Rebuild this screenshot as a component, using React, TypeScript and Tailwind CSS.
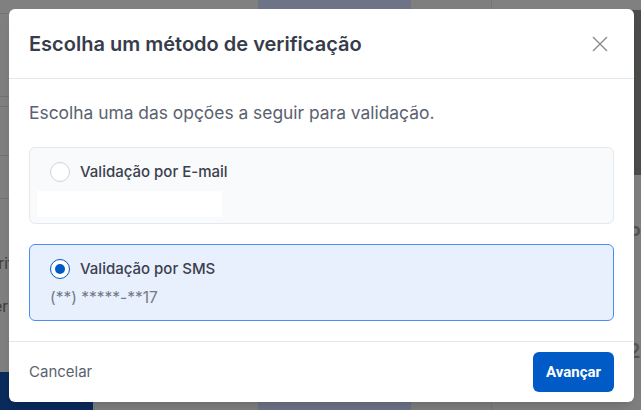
import React, { useState } from 'react';

const App: React.FC = () => {
  const [method, setMethod] = useState<'email' | 'sms'>('sms');

  return (
    <div className="relative h-[410px] w-[641px] overflow-hidden bg-[#808080] font-['Inter',sans-serif]">
      {/* dimmed page behind the dialog */}
      <div className="flex h-full">
        <div className="flex w-[262px] flex-col">
          <div className="h-[14px] border-b border-[#737373]" />
          <div className="h-[83px] border-b border-[#737373]" />
          <div className="h-[10px] border-b border-[#737373]" />
          <div className="h-[49px] border-b border-[#737373]" />
          <div className="h-[43px] border-b border-[#737373]" />
          <div className="flex flex-col gap-[22px] pt-[54px] text-[15px] leading-[21px] text-[#3a3a3a]">
            <span className="-ml-[20px]">Verif</span>
            <span className="-ml-[16px]">Ver</span>
          </div>
          <div className="mt-auto h-[38px] w-[93px] rounded-tr bg-[#0a2b5c]" />
        </div>
        <div className="w-[156px] bg-[#6e7487]" />
        <div className="w-[82px] border-r border-[#767676] bg-[#7f7f7f]" />
        <div className="flex flex-1 flex-col">
          <div className="flex h-[175px] justify-end pt-[10px]">
            <div className="w-[50px] rounded-bl-lg bg-[#4a4d4a]" />
          </div>
          <div className="flex flex-1 flex-col justify-around pl-[136px] text-[20px] font-semibold text-[#555]">
            <span>P</span>
            <span>2</span>
          </div>
        </div>
      </div>

      {/* dialog */}
      <div className="absolute left-[9px] top-[9px] flex h-[393px] w-[625px] flex-col rounded-md bg-white shadow-lg">
        <div className="flex h-[70px] items-center justify-between border-b border-[#e3e6ec] px-5">
          <h2 className="text-[20px] font-semibold text-[#363c4a]">Escolha um método de verificação</h2>
          <button className="mr-[6px] text-[#8a8a8a]">
            <svg width="16" height="16" viewBox="0 0 16 16" fill="none" stroke="currentColor" strokeWidth="1.4">
              <path d="M1 1L15 15M15 1L1 15" />
            </svg>
          </button>
        </div>

        <div className="flex flex-1 flex-col px-5 pt-[22px]">
          <p className="text-[17.4px] leading-[24px] text-[#5a6270]">Escolha uma das opções a seguir para validação.</p>

          <label
            onClick={() => setMethod('email')}
            className={`mt-[22px] flex h-[77px] cursor-pointer flex-col rounded-md border px-5 pt-[13px] ${
              method === 'email' ? 'border-[#4a8cf7] bg-[#e8effd]' : 'border-[#e5e8ef] bg-[#f9fafc]'
            }`}
          >
            <div className="flex items-center gap-[10px]">
              <Radio checked={method === 'email'} />
              <span className="text-[15px] font-medium text-[#3a404d]">Validação por E-mail</span>
            </div>
            <div className="-ml-[13px] mt-[7px] h-[26px] w-[185px] bg-white" />
          </label>

          <label
            onClick={() => setMethod('sms')}
            className={`mt-[20px] flex h-[77px] cursor-pointer flex-col rounded-md border px-5 pt-[13px] ${
              method === 'sms' ? 'border-[#4a8cf7] bg-[#e8effd]' : 'border-[#e5e8ef] bg-[#f9fafc]'
            }`}
          >
            <div className="flex items-center gap-[10px]">
              <Radio checked={method === 'sms'} />
              <span className="text-[15px] font-medium text-[#3a404d]">Validação por SMS</span>
            </div>
            <span className="mt-[5px] text-[15.5px] text-[#737a86]">(**) *****-**17</span>
          </label>
        </div>

        <div className="flex h-[61px] items-center justify-between border-t border-[#e3e6ec] px-5">
          <button className="text-[15px] text-[#5a6270]">Cancelar</button>
          <button className="h-[40px] rounded-md bg-[#005bc6] px-[13px] font-['Roboto',sans-serif] text-[15px] font-bold text-white">
            Avançar
          </button>
        </div>
      </div>
    </div>
  );
};

const Radio: React.FC<{ checked: boolean }> = ({ checked }) => (
  <span
    className={`flex h-[20px] w-[20px] items-center justify-center rounded-full border bg-white ${
      checked ? 'border-[1.5px] border-[#005bc6]' : 'border-[#cfd4dc]'
    }`}
  >
    {checked && <span className="h-[10px] w-[10px] rounded-full bg-[#005bc6]" />}
  </span>
);

export default App;
